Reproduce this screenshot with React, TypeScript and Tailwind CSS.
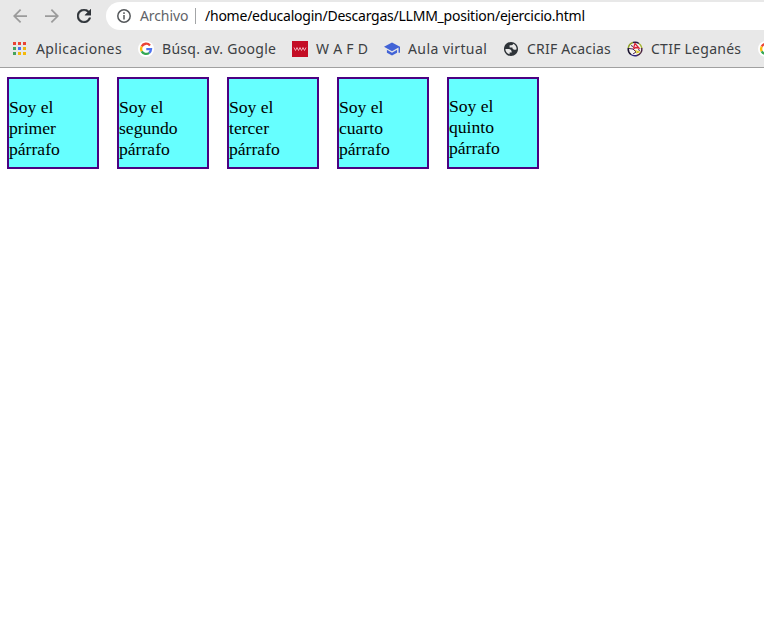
import type { ReactNode } from "react";

function GoogleIcon() {
  return (
    <svg width="16" height="16" viewBox="0 0 16 16" className="shrink-0">
      <circle cx="8" cy="8" r="8" fill="#fff" />
      <g fill="none" strokeWidth="2.3">
        <path d="M12 4.4A5 5 0 0 0 3.7 5.6" stroke="#ea4335" />
        <path d="M3.7 5.6A5 5 0 0 0 3.7 10.4" stroke="#fbbc05" />
        <path d="M3.7 10.4A5 5 0 0 0 11.2 11.8" stroke="#34a853" />
        <path d="M11.2 11.8A5 5 0 0 0 13 8.2H8.3" stroke="#4d72ee" />
      </g>
    </svg>
  );
}

function AppsIcon() {
  const colors = ["#ea4335", "#ea4335", "#ea4335", "#45a35c", "#4d72f0", "#e9b514", "#45a35c", "#f4b90b", "#f4b90b"];
  return (
    <svg width="16" height="16" viewBox="0 0 16 16" className="shrink-0">
      {colors.map((c, i) => (
        <rect key={i} x={1 + (i % 3) * 5} y={1 + Math.floor(i / 3) * 5} width="3" height="3" fill={c} />
      ))}
    </svg>
  );
}

function MadridIcon() {
  return (
    <svg width="16" height="16" viewBox="0 0 16 16" className="shrink-0">
      <rect width="16" height="16" fill="#c40d25" />
      <path d="M2 6.500l1.500 3L5 6.500l1.500 3L8 6.500l1.500 3 1.500-3 1.500 3 1.500-3" fill="none" stroke="#eda9b4" strokeWidth="1" />
    </svg>
  );
}

function SchoolIcon() {
  return (
    <svg width="16" height="14" viewBox="1 3 22 18" className="shrink-0" fill="#4263d6">
      <path d="M5 13.18v4L12 21l7-3.82v-4L12 17l-7-3.82zM12 3L1 9l11 6 9-4.91V17h2V9L12 3z" />
    </svg>
  );
}

function GlobeIcon() {
  return (
    <svg width="16" height="16" viewBox="0.600 0.600 22.800 22.800" className="shrink-0" fill="#2e3338">
      <path d="M12 2C6.480 2 2 6.480 2 12s4.480 10 10 10 10-4.480 10-10S17.520 2 12 2zM4 12h4.400c3.400 0 4.600 1.700 4.600 5h-3v2.400C6 18.800 4 15.500 4 12zM15 4.590C18 5.800 20 8.700 20 12v.3c-1 .7-2 .7-3 .7-2 0-3-1-3-3h-4V6.500h2.500C14 6.500 15 6 15 4.590z" />
    </svg>
  );
}

function CtifIcon() {
  return (
    <svg width="16" height="16" viewBox="0 0 16 16" className="shrink-0">
      <circle cx="8" cy="8" r="6.500" fill="#f7f4f1" />
      <g fill="none" strokeWidth="1.500">
        <path d="M1.300 7A6.800 6.800 0 0 1 6 1.500" stroke="#8fa02b" />
        <path d="M6 1.500A6.800 6.800 0 0 1 12 2.500" stroke="#251c43" />
        <path d="M12 2.500A6.800 6.800 0 0 1 14.800 7" stroke="#a3b22d" />
        <path d="M14.800 7A6.800 6.800 0 0 1 10 14.500" stroke="#4a2445" />
        <path d="M10 14.500A6.800 6.800 0 0 1 4 13.500" stroke="#2b237d" />
        <path d="M4 13.500A6.800 6.800 0 0 1 1.300 7" stroke="#17112c" />
      </g>
      <path d="M6.500 7l1.500-4.500L12 7l-3.500-.5L6 8.500" fill="none" stroke="#d82238" strokeWidth="1.300" />
      <path d="M2 7.500l4 .5 3 3-3 2M11 8.500l2 1M4 4.500l2 1" fill="none" stroke="#4a2358" strokeWidth="1" />
      <path d="M8 9.500l4 1.500-3 1" fill="none" stroke="#d9c623" strokeWidth="1.300" />
    </svg>
  );
}

function Bookmark({ icon, className, children }: { icon: ReactNode; className: string; children: ReactNode }) {
  return (
    <div className="flex shrink-0 items-center gap-2">
      {icon}
      <span className={`block whitespace-nowrap pb-0.5 ${className}`}>{children}</span>
    </div>
  );
}

const paragraphs = ["primer", "segundo", "tercer", "cuarto", "quinto"];

export default function App() {
  return (
    <div className="h-[640px] w-[764px] overflow-hidden bg-white">
      <header className="flex h-[68px] flex-col border-b border-[#a0a0a0] bg-[#e8e8e8] font-['Noto_Sans',sans-serif] text-[#3c4043]">
        <div className="flex h-[30px] items-end">
          <div className="flex h-7 w-[106px] shrink-0 items-center gap-[18px] pl-[13px]">
            <svg width="14" height="14" viewBox="4 4 16 16" fill="#9b9b9b">
              <path d="M20 11H7.830l5.590-5.590L12 4l-8 8 8 8 1.410-1.410L7.830 13H20v-2z" />
            </svg>
            <svg width="14" height="14" viewBox="4 4 16 16" fill="#9b9b9b">
              <path d="M12 4l-1.410 1.410L16.170 11H4v2h12.170l-5.580 5.590L12 20l8-8z" />
            </svg>
            <svg width="14" height="14" viewBox="4 4 16 16" fill="#2e3338" stroke="#2e3338" strokeWidth="0.500">
              <path d="M17.650 6.350C16.200 4.900 14.210 4 12 4c-4.420 0-7.990 3.580-7.990 8s3.570 8 7.990 8c3.730 0 6.840-2.550 7.730-6h-2.080c-.82 2.330-3.040 4-5.650 4-3.310 0-6-2.690-6-6s2.690-6 6-6c1.660 0 3.140.69 4.220 1.780L13 11h7V4l-2.350 2.350z" />
            </svg>
          </div>
          <div className="flex h-7 flex-1 items-center rounded-l-full bg-white pl-[11px]">
            <svg width="14" height="14" viewBox="0 0 14 14" className="shrink-0" fill="none" stroke="#55585b">
              <circle cx="7" cy="7" r="6.200" strokeWidth="1.500" />
              <path d="M7 6v4.500M7 3.300v1.600" strokeWidth="1.500" />
            </svg>
            <span className="ml-[9px] w-[55px] shrink-0 whitespace-nowrap pb-0.5 text-[14px] tracking-[-0.1px] text-[#5f6368]">Archivo</span>
            <span className="h-4 w-px shrink-0 bg-[#a3a5a7]" />
            <span className="ml-[9px] whitespace-nowrap pb-0.5 text-[14px] tracking-[-0.235px] text-black">/home/educalogin/Descargas/LLMM_position/ejercicio.html</span>
          </div>
        </div>
        <nav className="flex h-[37px] items-center pl-3 pt-px text-[14px]">
          <Bookmark icon={<AppsIcon />} className="w-[102px] tracking-[0.38px]">Aplicaciones</Bookmark>
          <Bookmark icon={<GoogleIcon />} className="w-[130px] tracking-[0.3px]">Búsq. av. Google</Bookmark>
          <Bookmark icon={<MadridIcon />} className="w-[68px] tracking-[0.25px]">W A F D</Bookmark>
          <Bookmark icon={<SchoolIcon />} className="w-[95px] tracking-[0.4px]">Aula virtual</Bookmark>
          <Bookmark icon={<GlobeIcon />} className="w-[100px] tracking-[0.2px]">CRIF Acacias</Bookmark>
          <Bookmark icon={<CtifIcon />} className="w-[107px] tracking-[0.25px]">CTIF Leganés</Bookmark>
          <GoogleIcon />
        </nav>
      </header>
      <main className="flex gap-[18px] pl-[7px] pt-[9px] font-['Liberation_Serif',serif] text-[17.6px] leading-[21px] text-black">
        {paragraphs.map((word, i) => (
          <div key={word} className={`h-[92px] w-[92px] border-2 border-[#4b0082] bg-[#66ffff] ${i === 4 ? "pt-[17px]" : "pt-[18px]"}`}>
            <p>Soy el {word} párrafo</p>
          </div>
        ))}
      </main>
    </div>
  );
}
